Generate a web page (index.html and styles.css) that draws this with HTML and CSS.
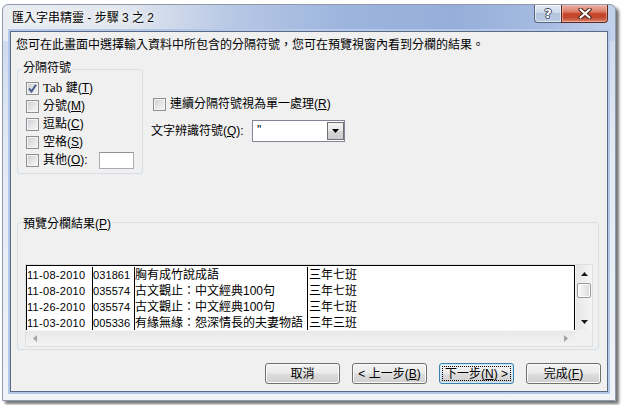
FILE: index.html
```html
<!DOCTYPE html>
<html lang="zh-Hant">
<head>
<meta charset="utf-8">
<title>匯入字串精靈 - 步驟 3 之 2</title>
<link rel="stylesheet" href="styles.css">
</head>
<body>
<div class="window">
  <div class="titlebar">
    <span class="title">匯入字串精靈 - 步驟 3 之 2</span>
    <div class="caption-btns">
      <div class="cbtn help"><span>?</span></div>
      <div class="cbtn close">
        <svg width="14" height="11" viewBox="0 0 14 11"><path d="M2.5 1.5 L11.5 9.5 M11.5 1.5 L2.5 9.5" stroke="#47211a" stroke-width="4.2" stroke-linecap="round"/><path d="M2.5 1.5 L11.5 9.5 M11.5 1.5 L2.5 9.5" stroke="#fff" stroke-width="2.2" stroke-linecap="round"/></svg>
      </div>
    </div>
  </div>
  <div class="client">
    <p class="intro">您可在此畫面中選擇輸入資料中所包含的分隔符號，您可在預覽視窗內看到分欄的結果。</p>
    <div class="options">
      <div class="group delim">
        <span class="legend">分隔符號</span>
        <ul class="checks">
          <li class="check"><span class="box on"><svg width="11" height="11" viewBox="0 0 11 11"><path d="M2 5.5 L4.5 8.5 L9 1.8" fill="none" stroke="#4a5e8c" stroke-width="2"/></svg></span><span><span class="en">Tab</span> 鍵(<u>T</u>)</span></li>
          <li class="check"><span class="box"></span><span>分號(<u>M</u>)</span></li>
          <li class="check"><span class="box"></span><span>逗點(<u>C</u>)</span></li>
          <li class="check"><span class="box"></span><span>空格(<u>S</u>)</span></li>
          <li class="check"><span class="box"></span><span>其他(<u>O</u>):</span><span class="field"></span></li>
        </ul>
      </div>
      <div class="side">
        <div class="check consec"><span class="box"></span><span>連續分隔符號視為單一處理(<u>R</u>)</span></div>
        <div class="qualifier">
          <span class="qlabel">文字辨識符號(<u>Q</u>):</span>
          <div class="combo"><span class="val">"</span><span class="drop"><svg width="7" height="4" viewBox="0 0 7 4"><path d="M0 0 H7 L3.5 4 Z" fill="#000"/></svg></span></div>
        </div>
      </div>
    </div>
    <div class="group preview">
      <span class="legend">預覽分欄結果(<u>P</u>)</span>
      <div class="gridframe">
        <div class="data">
          <div class="col c1"><div>11-08-2010</div><div>11-08-2010</div><div>11-26-2010</div><div>11-03-2010</div></div>
          <div class="col c2"><div>031861</div><div>035574</div><div>035574</div><div>005336</div></div>
          <div class="col c3"><div>胸有成竹說成語</div><div>古文觀止：中文經典100句</div><div>古文觀止：中文經典100句</div><div>有緣無緣：怨深情長的夫妻物語</div></div>
          <div class="col c4"><div>三年七班</div><div>三年七班</div><div>三年七班</div><div>三年三班</div></div>
        </div>
        <div class="vscroll">
          <span class="arrow"><svg width="7" height="4" viewBox="0 0 7 4"><path d="M3.5 0 L7 4 H0 Z" fill="#1a1a1a"/></svg></span>
          <span class="track"><span class="thumb"></span></span>
          <span class="arrow"><svg width="7" height="4" viewBox="0 0 7 4"><path d="M0 0 H7 L3.5 4 Z" fill="#1a1a1a"/></svg></span>
        </div>
        <div class="hscroll">
          <span class="harrow"><svg width="4" height="7" viewBox="0 0 4 7"><path d="M4 0 V7 L0 3.5 Z" fill="#a3a3a3"/></svg></span>
          <span class="harrow"><svg width="4" height="7" viewBox="0 0 4 7"><path d="M0 0 V7 L4 3.5 Z" fill="#a3a3a3"/></svg></span>
        </div>
        <div class="corner"></div>
      </div>
    </div>
    <div class="buttons">
      <div class="btn">取消</div>
      <div class="btn">&lt; 上一步(<u>B</u>)</div>
      <div class="btn default"><span class="focus">下一步(<u>N</u>) &gt;</span></div>
      <div class="btn">完成(<u>F</u>)</div>
    </div>
  </div>
</div>
</body>
</html>
```
FILE: styles.css
```css
* { box-sizing: border-box; }
html, body { margin: 0; padding: 0; }
body {
  width: 622px;
  height: 405px;
  overflow: hidden;
  background: #fff;
  font: 12px/14px "Liberation Sans", "Noto Sans CJK TC", sans-serif;
  color: #000;
}
u { text-decoration: underline; text-underline-offset: 1px; }

.window {
  margin: 4px 0 0 2px;
  width: 614px;
  height: 397px;
  border: 1px solid #8e99ab;
  border-radius: 6px 6px 0 0;
  box-shadow: 3px 3px 3px rgba(0, 0, 0, 0.55);
  background:
    linear-gradient(to right, #e9ecf1 0%, #e1e6ee 20%, #b6c7e5 38%, #9db4dd 56%, #96aed9 74%, #a9bde2 90%, #c3d2ec 100%) top / 100% 36px no-repeat,
    linear-gradient(to bottom, #c9d6ec 0%, #e4eaf3 35%, #f0f3f8 100%);
  display: flex;
  flex-direction: column;
  padding: 0 7px 8px 7px;
}

.titlebar {
  height: 26px;
  display: flex;
  justify-content: space-between;
  align-items: flex-start;
  padding-left: 2px;
}
.title {
  margin-top: 6px;
  text-shadow: 0 0 6px #fff, 0 0 3px #fff;
}
.caption-btns { display: flex; }
.cbtn {
  height: 18px;
  display: flex;
  align-items: center;
  justify-content: center;
  border: 1px solid #57667e;
  border-top: none;
}
.help {
  width: 27px;
  border-radius: 0 0 0 4px;
  border-right: none;
  background: linear-gradient(to bottom, #e4ebf5 0%, #cdd8ea 45%, #b3c3dc 50%, #bccbe2 100%);
  box-shadow: inset 0 0 0 1px rgba(255, 255, 255, 0.55);
}
.help span {
  color: #fff;
  font: bold 13px/13px "DejaVu Sans", sans-serif;
  text-shadow: 1px 0 #3d4a62, -1px 0 #3d4a62, 0 1px #3d4a62, 0 -1px #3d4a62;
}
.close {
  width: 47px;
  border-radius: 0 0 4px 0;
  border-color: #5a2a22;
  background: linear-gradient(to bottom, #eab0a2 0%, #dc7e68 40%, #c6442a 52%, #c24a30 75%, #dc8a70 100%);
  box-shadow: inset 0 0 0 1px rgba(255, 210, 200, 0.5);
}
.close svg { display: block; }

.client {
  height: 361px;
  border: 1px solid #5b6a84;
  box-shadow: 0 0 0 2px #b4c9ea;
  background: #f0f0f0;
  display: flex;
  flex-direction: column;
}
.intro { margin: 6px 0 0 5px; }

.options {
  margin: 17px 0 0 6px;
  display: flex;
  align-items: flex-start;
}

.group {
  border: 1px solid #d5dfe5;
  border-radius: 3px;
}
.legend {
  display: table;
  padding: 0 1px;
  background: #f0f0f0;
  line-height: 14px;
}
.delim {
  width: 126px;
  padding: 0 8px 4px 8px;
}
.delim .legend { margin: -9px 0 0 -4px; }
.checks {
  list-style: none;
  margin: 4px 0 0 0;
  padding: 0;
}
.check {
  height: 18px;
  display: flex;
  align-items: center;
  gap: 4px;
}
.en { font-family: "Liberation Serif", serif; font-size: 13px; }
.box {
  width: 13px;
  height: 13px;
  flex: none;
  border: 1px solid #8e8f8f;
  background: linear-gradient(135deg, #c9cdd2 0%, #e3e4e6 50%, #f7f7f7 100%);
  box-shadow: inset 0 0 0 1px #f4f4f4;
  display: flex;
  align-items: center;
  justify-content: center;
}
.box svg { display: block; }
.field {
  margin-left: auto;
  width: 35px;
  height: 17px;
  background: #fff;
  border: 1px solid #abadb3;
  border-top-color: #8f939b;
}

.side { margin: 26px 0 0 8px; }
.consec { padding-left: 2px; }
.qualifier {
  margin-top: 7px;
  display: flex;
  align-items: center;
}
.qlabel { width: 101px; }
.combo {
  width: 93px;
  height: 22px;
  border: 1px solid #7f8591;
  background: #fff;
  padding: 1px 0 1px 4px;
  display: flex;
  justify-content: space-between;
}
.val { line-height: 16px; }
.drop {
  width: 17px;
  height: 18px;
  border: 1px solid #707070;
  background: linear-gradient(to bottom, #f3f3f3 0%, #e6e6e6 50%, #d6d6d6 52%, #cbcbcb 100%);
  display: flex;
  align-items: center;
  justify-content: center;
}
.drop svg { display: block; }

.preview {
  margin: 48px 0 0 6px;
  width: 582px;
  padding: 0 5px 2px 7px;
}
.preview .legend { margin: -6px 0 0 -3px; }

.gridframe {
  margin-top: 33px;
  width: 568px;
  height: 83px;
  border: 1px solid #dedede;
  display: grid;
  grid-template-columns: 549px 17px;
  grid-template-rows: 65px 16px;
}
.data {
  display: flex;
  border: 1px solid #000;
  border-bottom: none;
  background: #fff;
  overflow: hidden;
  padding-top: 1px;
}
.col {
  border-right: 1px solid #000;
  line-height: 16px;
  white-space: nowrap;
}
.col > div { height: 16px; }
.c1 { width: 66px; font-size: 11px; letter-spacing: 0.3px; }
.c2 { width: 42px; font-size: 11px; letter-spacing: 0.1px; }
.c3 { width: 173px; }
.c4 { flex: 1; border-right: none; padding-left: 1px; }

.vscroll {
  border-left: 1px solid #f4f4f4;
  background: linear-gradient(to right, #e6e6e6 0%, #f5f5f5 100%);
  display: flex;
  flex-direction: column;
}
.arrow {
  height: 17px;
  display: flex;
  align-items: center;
  justify-content: center;
}
.arrow svg { display: block; }
.track { flex: 1; padding: 1px 1px 0 1px; }
.thumb {
  display: block;
  height: 15px;
  border: 1px solid #9c9c9c;
  border-radius: 2px;
  background: linear-gradient(to right, #f7f7f7 0%, #ececec 50%, #d9d9d9 100%);
  box-shadow: inset 0 0 0 1px #fbfbfb;
}
.hscroll {
  background: linear-gradient(to bottom, #e9e9e9 0%, #f3f3f3 100%);
  border-top: 1px solid #f7f7f7;
  display: flex;
  align-items: center;
  justify-content: space-between;
  padding: 0 7px;
}
.harrow svg { display: block; }
.corner { background: #f0f0f0; }

.buttons {
  margin-top: 13px;
  display: flex;
  justify-content: flex-end;
  gap: 12px;
  padding-right: 6px;
}
.btn {
  width: 75px;
  height: 21px;
  border: 1px solid #707070;
  border-radius: 3px;
  background: linear-gradient(to bottom, #f2f2f2 0%, #ebebeb 48%, #dddddd 52%, #cfcfcf 100%);
  box-shadow: inset 0 0 0 1px #fbfbfb;
  display: flex;
  align-items: center;
  justify-content: center;
  line-height: 14px;
  white-space: nowrap;
}
.btn.default {
  border-color: #3c7fb1;
  box-shadow: inset 0 0 0 1px #c9ecfd;
  padding: 2px;
}
.focus {
  width: 100%;
  height: 100%;
  border: 1px dotted #000;
  display: flex;
  align-items: center;
  justify-content: center;
}
```
